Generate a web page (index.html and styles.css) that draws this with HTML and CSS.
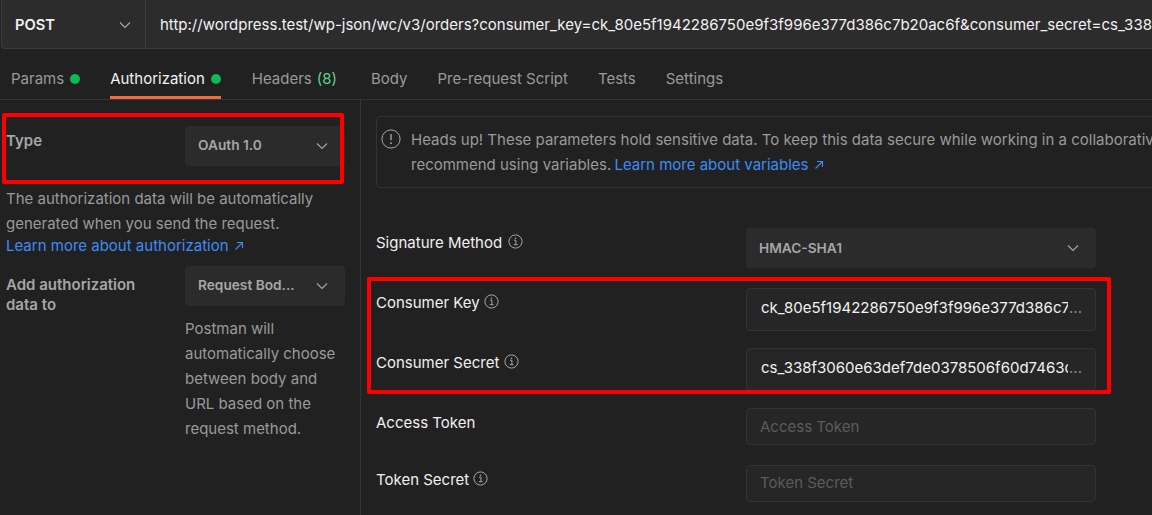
FILE: index.html
```html
<!DOCTYPE html>
<html lang="en">
<head>
<meta charset="utf-8">
<title>Postman OAuth 1.0</title>
<link rel="stylesheet" href="styles.css">
</head>
<body>
<svg class="defs" width="0" height="0" aria-hidden="true">
  <defs>
    <symbol id="chev" viewBox="0 0 12 8"><path d="M1 1.5l5 5 5-5" fill="none" stroke="currentColor" stroke-width="1.1"/></symbol>
    <symbol id="info" viewBox="0 0 15 15"><circle cx="7.5" cy="7.5" r="6.6" fill="none" stroke="currentColor" stroke-width="1"/><path d="M6 6.2h1.9v4.3M5.8 10.7h3.8" fill="none" stroke="currentColor" stroke-width="1"/><circle cx="7.5" cy="4.2" r=".8" fill="currentColor"/></symbol>
    <symbol id="ext" viewBox="0 0 10 10"><path d="M1.5 8.5l7-7M3 1.5h5.5V7" fill="none" stroke="currentColor" stroke-width="1.1"/></symbol>
  </defs>
</svg>
<div class="app">
  <header class="urlbar">
    <div class="method"><span>POST</span><svg class="chev"><use href="#chev"/></svg></div>
    <div class="url">http://wordpress.test/wp-json/wc/v3/orders?consumer_key=ck_80e5f1942286750e9f3f996e377d386c7b20ac6f&amp;consumer_secret=cs_338f3060e63def7de0378506f60d7463</div>
  </header>
  <nav class="tabs">
    <a class="tab">Params<i class="dot"></i></a>
    <a class="tab active">Authorization<i class="dot"></i></a>
    <a class="tab tab-headers">Headers <b class="count">(8)</b></a>
    <a class="tab">Body</a>
    <a class="tab">Pre-request Script</a>
    <a class="tab">Tests</a>
    <a class="tab">Settings</a>
  </nav>
  <main class="panes">
    <aside class="left">
      <div class="type-row">
        <div class="strong-label">Type</div>
        <div class="select select-left"><span class="select-text">OAuth 1.0</span><svg class="chev"><use href="#chev"/></svg></div>
      </div>
      <p class="desc">The authorization data will be automatically generated when you send the request.</p>
      <a class="link link-left">Learn more about authorization <svg class="ext"><use href="#ext"/></svg></a>
      <div class="add-row">
        <div class="strong-label add-label">Add authorization data to</div>
        <div class="add-col">
          <div class="select select-left"><span class="select-text">Request Bod...</span><svg class="chev"><use href="#chev"/></svg></div>
          <p class="desc small">Postman will automatically choose between body and URL based on the request method.</p>
        </div>
      </div>
    </aside>
    <section class="right">
      <div class="alert">
        <svg class="alert-icon" viewBox="0 0 22 22"><circle cx="11" cy="11" r="10" fill="none" stroke="currentColor" stroke-width="1.1"/><path d="M11 5.5v7" stroke="currentColor" stroke-width="1.5" fill="none"/><circle cx="11" cy="15.6" r="1" fill="currentColor"/></svg>
        <p>Heads up! These parameters hold sensitive data. To keep this data secure while working in a collaborative environment, we<br>recommend using variables. <a class="link link-inline">Learn more about variables <svg class="ext"><use href="#ext"/></svg></a></p>
      </div>
      <div class="form">
        <div class="row row-sig">
          <label class="label">Signature Method <svg class="info info-sig"><use href="#info"/></svg></label>
          <div class="select wide"><span class="select-text">HMAC-SHA1</span><svg class="chev"><use href="#chev"/></svg></div>
        </div>
        <div class="row row-key">
          <label class="label">Consumer Key <svg class="info"><use href="#info"/></svg></label>
          <div class="input filled"><span class="val">ck_80e5f1942286750e9f3f996e377d386c7b20ac6f</span><span class="more">...</span></div>
        </div>
        <div class="row row-key">
          <label class="label">Consumer Secret <svg class="info"><use href="#info"/></svg></label>
          <div class="input filled"><span class="val">cs_338f3060e63def7de0378506f60d7463c4d0b1e2</span><span class="more">...</span></div>
        </div>
        <div class="row row-token">
          <label class="label">Access Token</label>
          <div class="input empty">Access Token</div>
        </div>
        <div class="row row-token">
          <label class="label">Token Secret <svg class="info"><use href="#info"/></svg></label>
          <div class="input empty">Token Secret</div>
        </div>
      </div>
    </section>
  </main>
</div>
<div class="mark mark-type"></div>
<div class="mark mark-keys"></div>
</body>
</html>
```
FILE: styles.css
```css
* { box-sizing: border-box; }
html, body { margin: 0; height: 100%; }
body {
  position: relative;
  overflow: hidden;
  background: #212121;
  color: #a6a6a6;
  font-family: Inter, "Liberation Sans", sans-serif;
  font-size: 15px;
}
.defs { position: absolute; }
.app { width: 1152px; height: 515px; display: flex; flex-direction: column; overflow: hidden; }

.urlbar {
  display: flex;
  flex: none;
  height: 49px;
  margin-left: 1px;
  background: #2c2c2c;
  border: 1px solid #3d3d3d;
  border-top: 0;
  border-right: 0;
  border-bottom-left-radius: 4px;
}
.method {
  flex: none;
  width: 144px;
  display: flex;
  align-items: center;
  justify-content: space-between;
  padding: 1px 14px 0 13px;
  border-right: 1px solid #3d3d3d;
  color: #f2f2f2;
  font-weight: 600;
  font-size: 14.7px;
}
.url {
  flex: 1;
  min-width: 0;
  padding: 15px 0 0 14px;
  color: #f2f2f2;
  line-height: 20px;
  white-space: nowrap;
  overflow: hidden;
}
.chev { width: 12px; height: 8px; color: #a6a6a6; flex: none; }

.tabs {
  flex: none;
  display: flex;
  height: 51px;
  border-bottom: 1px solid #363636;
  padding-left: 11px;
  gap: 30px;
}
.tab {
  display: flex;
  align-items: center;
  height: 50px;
  padding-top: 9px;
  color: #9a9a9a;
  white-space: nowrap;
}
.tab.active {
  color: #f2f2f2;
  box-shadow: inset 0 -3px 0 #f26b3a;
}
.tab-headers { margin: 0 4px 0 1px; }
.dot { width: 10px; height: 10px; margin-left: 6px; border-radius: 50%; background: #0cbb52; }
.count { margin-left: 5px; color: #5fd38a; font-weight: 400; }

.panes { flex: 1; display: flex; min-height: 0; }
.left {
  flex: none;
  width: 361px;
  padding: 26px 15px 0 6px;
  border-right: 1px solid #363636;
}
.type-row { display: flex; }
.strong-label { width: 179px; flex: none; color: #a6a6a6; font-weight: 600; line-height: 20px; }
.type-row .strong-label { padding-top: 5px; }
.select {
  flex: 1;
  height: 40px;
  display: flex;
  align-items: center;
  justify-content: space-between;
  padding: 0 17px 0 13px;
  background: #2b2b2b;
  border-radius: 4px;
}
.select-left .select-text { margin-top: -2px; }
.select-text { font-size: 13.7px; font-weight: 600; color: #a6a6a6; }
.desc { margin: 20px 0 0; line-height: 25px; color: #9a9a9a; }
.desc.small { margin: 10px 0 0; }
.link { color: #3d8df5; white-space: nowrap; }
.link-left { display: block; line-height: 20px; }
.link-inline { margin-left: -1px; }
.ext { width: 10px; height: 10px; margin-left: 1px; color: #3d8df5; }
.add-row { display: flex; margin-top: 10px; }
.add-label { padding: 9px 30px 0 0; }
.add-col { flex: 1; min-width: 0; }

.right { flex: 1; min-width: 0; padding: 16px 0 0 15px; overflow: hidden; }
.alert {
  width: 900px;
  height: 72px;
  display: flex;
  gap: 10px;
  padding: 12px 0 0 4px;
  border: 1px solid #333;
  border-radius: 4px;
}
.alert-icon { width: 20px; height: 20px; flex: none; color: #a6a6a6; }
.alert p { margin: -2px 0 0; line-height: 25px; color: #9a9a9a; white-space: nowrap; }

.form { margin-top: 40px; width: 720px; }
.row { display: grid; grid-template-columns: 370px 350px; }
.row-sig { height: 60px; }
.row-key { height: 60px; }
.row-token { height: 57px; }
.label { color: #f0f0f0; line-height: 20px; padding-top: 5px; }
.info { width: 15px; height: 15px; vertical-align: -1px; color: #a6a6a6; }
.info-sig { margin-left: 2px; }
.input {
  display: flex;
  border: 1px solid #333;
  border-radius: 4px;
  background: #262626;
  white-space: nowrap;
  overflow: hidden;
}
.input.filled { height: 43px; padding: 9px 13px 0 14px; color: #f2f2f2; line-height: 20px; }
.val { flex: 1; min-width: 0; overflow: hidden; }
.more { flex: none; color: #8a8a8a; margin-left: 1px; width: 13px; }
.input.empty { height: 37px; padding: 8px 13px 0; color: #5c5c5c; line-height: 20px; }
.row-token + .row-token .input.empty { padding-top: 7px; }
.wide { width: 350px; }

.mark {
  position: absolute;
  border: 4px solid #ff0000;
  border-radius: 2px;
  pointer-events: none;
}
.mark-type { left: 2px; top: 113px; width: 342px; height: 71px; }
.mark-keys { left: 367px; top: 277px; width: 744px; height: 117px; }
```
